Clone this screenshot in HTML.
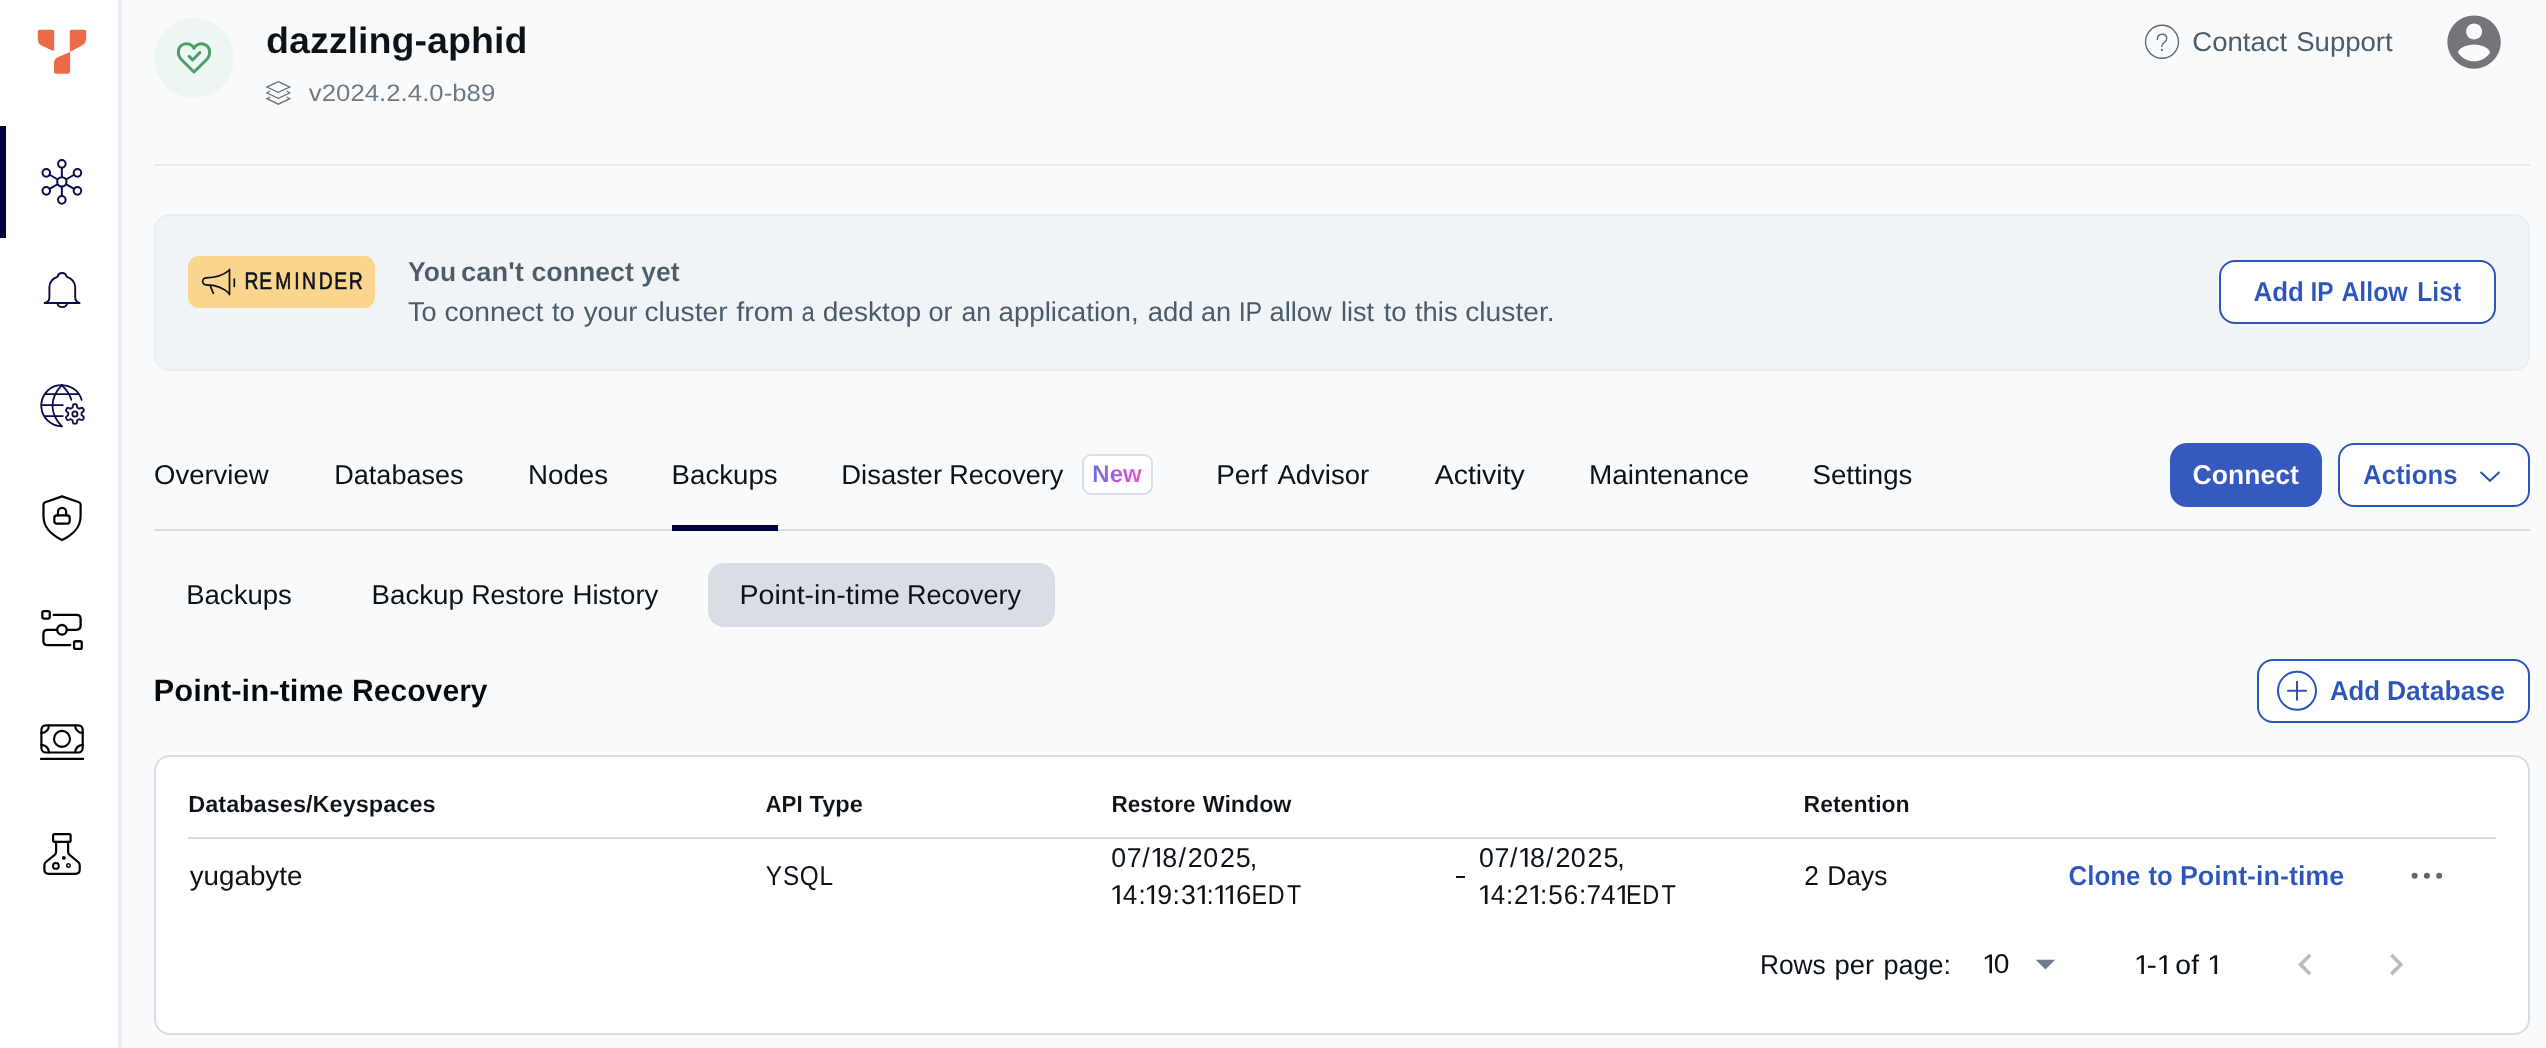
<!DOCTYPE html>
<html><head><meta charset="utf-8"><title>dazzling-aphid</title>
<style>
html,body{margin:0;padding:0}
body{width:2546px;height:1048px;overflow:hidden;background:#f9fafc;position:relative;font-family:"Liberation Sans",sans-serif}
.b{position:absolute;box-sizing:border-box}
.t{position:absolute;white-space:pre;line-height:1;font-family:"Liberation Sans",sans-serif;will-change:transform}
svg{position:absolute;left:0;top:0;overflow:visible}
</style></head><body>
<!-- sidebar -->
<div class="b" style="left:0;top:0;width:118px;height:1048px;background:#fff"></div>
<div class="b" style="left:118px;top:0;width:4px;height:1048px;background:#e9ecf1"></div>
<div class="b" style="left:0;top:126px;width:6px;height:112px;background:#000041"></div>
<!-- header -->
<div class="b" style="left:154px;top:18px;width:80px;height:80px;border-radius:50%;background:#edf6f2"></div>
<div class="b" style="left:154px;top:164px;width:2376px;height:2px;background:#e9edf2"></div>
<!-- banner -->
<div class="b" style="left:154px;top:214px;width:2376px;height:157px;border-radius:16px;background:#f0f4f7;border:2px solid #e9eef2"></div>
<div class="b" style="left:188px;top:256px;width:187px;height:52px;border-radius:11px;background:#fad58e"></div>
<div class="b" style="left:2219px;top:260px;width:277px;height:64px;border-radius:16px;background:#fff;border:2px solid #2b55b9"></div>
<!-- tabs -->
<div class="b" style="left:154px;top:529px;width:2376px;height:2px;background:#d5dde4"></div>
<div class="b" style="left:672px;top:525px;width:106px;height:6px;background:#000041"></div>
<div class="b" style="left:1082px;top:454px;width:71px;height:41px;border-radius:9px;background:#fff;border:2px solid #d8dfe8"></div>
<div class="b" style="left:2170px;top:443px;width:152px;height:64px;border-radius:17px;background:#3559be"></div>
<div class="b" style="left:2338px;top:443px;width:192px;height:64px;border-radius:16px;background:#fff;border:2px solid #2b55b9"></div>
<!-- subtabs -->
<div class="b" style="left:708px;top:563px;width:347px;height:64px;border-radius:16px;background:#d9dee5"></div>
<!-- section -->
<div class="b" style="left:2257px;top:659px;width:273px;height:64px;border-radius:16px;background:#fff;border:2px solid #2b55b9"></div>
<!-- card -->
<div class="b" style="left:154px;top:755px;width:2376px;height:280px;border-radius:16px;background:#fff;border:2px solid #d8dde5"></div>
<div class="b" style="left:188px;top:837px;width:2308px;height:2px;background:#d5dde4"></div>

<div class="b" style="left:1456.3px;top:875.8px;width:8.7px;height:2.3px;background:#0b1219;border-radius:0.3px"></div>
<svg id="txt" width="2546" height="1048" viewBox="0 0 2546 1048" style="will-change:transform;font-family:'Liberation Sans',sans-serif" text-rendering="geometricPrecision">
<defs><linearGradient id="ng" x1="0" y1="0" x2="1" y2="0"><stop offset="0" stop-color="#6a70e2"/><stop offset="0.55" stop-color="#b45ad6"/><stop offset="1" stop-color="#ec4fcf"/></linearGradient></defs>
<text transform="translate(265.98,52.90) scale(1.0236,1)" font-size="36.80" font-weight="700" fill="#0b1219" stroke="#f9fafc" stroke-width="0.12">dazzling-aphid</text>
<text transform="translate(308.80,100.90) scale(1.0800,1)" font-size="23.80" font-weight="400" fill="#6b7a87" letter-spacing="0.046" >v2024.2.4.0-b89</text>
<text transform="translate(2192.29,50.80) scale(1.0135,1)" font-size="27.20" font-weight="400" fill="#4a5d6d" >Contact</text>
<text transform="translate(2296.19,50.80) scale(1.0130,1)" font-size="27.20" font-weight="400" fill="#4a5d6d" >Support</text>
<text transform="translate(408.00,280.80) scale(0.9744,1)" font-size="27.20" font-weight="700" fill="#4a5c6b" stroke="#f0f4f7" stroke-width="0.12">You</text>
<text transform="translate(460.99,280.80) scale(1.0071,1)" font-size="27.20" font-weight="700" fill="#4a5c6b" stroke="#f0f4f7" stroke-width="0.12">can't</text>
<text transform="translate(531.52,280.80) scale(0.9813,1)" font-size="27.20" font-weight="700" fill="#4a5c6b" stroke="#f0f4f7" stroke-width="0.12">connect</text>
<text transform="translate(641.25,280.80) scale(0.9748,1)" font-size="27.20" font-weight="700" fill="#4a5c6b" stroke="#f0f4f7" stroke-width="0.12">yet</text>
<text transform="translate(408.00,320.80) scale(0.9967,1)" font-size="27.20" font-weight="400" fill="#4a5c6b" >To</text>
<text transform="translate(444.46,320.80) scale(1.0378,1)" font-size="27.20" font-weight="400" fill="#4a5c6b" >connect</text>
<text transform="translate(552.00,320.80) scale(1.0091,1)" font-size="27.20" font-weight="400" fill="#4a5c6b" >to</text>
<text transform="translate(583.75,320.80) scale(1.0173,1)" font-size="27.20" font-weight="400" fill="#4a5c6b" >your</text>
<text transform="translate(644.46,320.80) scale(1.0377,1)" font-size="27.20" font-weight="400" fill="#4a5c6b" >cluster</text>
<text transform="translate(736.25,320.80) scale(1.0573,1)" font-size="27.20" font-weight="400" fill="#4a5c6b" >from</text>
<text transform="translate(801.62,320.80) scale(0.8800,1)" font-size="27.20" font-weight="400" fill="#4a5c6b" >a</text>
<text transform="translate(822.72,320.80) scale(1.0338,1)" font-size="27.20" font-weight="400" fill="#4a5c6b" >desktop</text>
<text transform="translate(928.51,320.80) scale(0.9948,1)" font-size="27.20" font-weight="400" fill="#4a5c6b" >or</text>
<text transform="translate(961.52,320.80) scale(0.9779,1)" font-size="27.20" font-weight="400" fill="#4a5c6b" >an</text>
<text transform="translate(998.48,320.80) scale(1.0186,1)" font-size="27.20" font-weight="400" fill="#4a5c6b" >application,</text>
<text transform="translate(1147.74,320.80) scale(1.0118,1)" font-size="27.20" font-weight="400" fill="#4a5c6b" >add</text>
<text transform="translate(1201.00,320.80) scale(0.9957,1)" font-size="27.20" font-weight="400" fill="#4a5c6b" >an</text>
<text transform="translate(1238.66,320.80) scale(0.9200,1)" font-size="27.20" font-weight="400" fill="#4a5c6b" >IP</text>
<text transform="translate(1269.50,320.80) scale(1.0029,1)" font-size="27.20" font-weight="400" fill="#4a5c6b" >allow</text>
<text transform="translate(1341.01,320.80) scale(0.9947,1)" font-size="27.20" font-weight="400" fill="#4a5c6b" >list</text>
<text transform="translate(1383.75,320.80) scale(1.0091,1)" font-size="27.20" font-weight="400" fill="#4a5c6b" >to</text>
<text transform="translate(1415.00,320.80) scale(1.0069,1)" font-size="27.20" font-weight="400" fill="#4a5c6b" >this</text>
<text transform="translate(1465.21,320.80) scale(1.0380,1)" font-size="27.20" font-weight="400" fill="#4a5c6b" >cluster.</text>
<text transform="translate(2253.50,300.60) scale(0.9543,1)" font-size="27.20" font-weight="700" fill="#2b55b9" stroke="#ffffff" stroke-width="0.12">Add</text>
<text transform="translate(2310.50,300.60) scale(0.9001,1)" font-size="27.20" font-weight="700" fill="#2b55b9" stroke="#ffffff" stroke-width="0.12">IP</text>
<text transform="translate(2341.40,300.60) scale(0.9148,1)" font-size="27.20" font-weight="700" fill="#2b55b9" stroke="#ffffff" stroke-width="0.12">Allow</text>
<text transform="translate(2417.29,300.60) scale(0.9073,1)" font-size="27.20" font-weight="700" fill="#2b55b9" stroke="#ffffff" stroke-width="0.12">List</text>
<text transform="translate(1092.30,482.00) scale(1.0004,1)" font-size="24.00" font-weight="700" fill="url(#ng)" stroke="#ffffff" stroke-width="0.12">New</text>
<text transform="translate(154.06,483.90) scale(1.0103,1)" font-size="27.20" font-weight="400" fill="#0b1219" >Overview</text>
<text transform="translate(334.31,483.90) scale(0.9939,1)" font-size="27.20" font-weight="400" fill="#0b1219" >Databases</text>
<text transform="translate(527.96,483.90) scale(1.0198,1)" font-size="27.20" font-weight="400" fill="#0b1219" >Nodes</text>
<text transform="translate(671.57,483.90) scale(1.0169,1)" font-size="27.20" font-weight="400" fill="#0b1219" >Backups</text>
<text transform="translate(841.23,483.90) scale(1.0112,1)" font-size="27.20" font-weight="400" fill="#0b1219" >Disaster</text>
<text transform="translate(949.26,483.90) scale(0.9935,1)" font-size="27.20" font-weight="400" fill="#0b1219" >Recovery</text>
<text transform="translate(1216.14,483.90) scale(1.0288,1)" font-size="27.20" font-weight="400" fill="#0b1219" >Perf</text>
<text transform="translate(1277.50,483.90) scale(1.0110,1)" font-size="27.20" font-weight="400" fill="#0b1219" >Advisor</text>
<text transform="translate(1434.70,483.90) scale(1.0461,1)" font-size="27.20" font-weight="400" fill="#0b1219" >Activity</text>
<text transform="translate(1588.94,483.90) scale(1.0278,1)" font-size="27.20" font-weight="400" fill="#0b1219" >Maintenance</text>
<text transform="translate(1812.48,483.90) scale(1.0172,1)" font-size="27.20" font-weight="400" fill="#0b1219" >Settings</text>
<text transform="translate(2192.52,484.10) scale(0.9787,1)" font-size="27.20" font-weight="700" fill="#ffffff" stroke="#3559be" stroke-width="0.12">Connect</text>
<text transform="translate(2363.10,484.10) scale(0.9465,1)" font-size="27.20" font-weight="700" fill="#2b55b9" stroke="#ffffff" stroke-width="0.12">Actions</text>
<text transform="translate(186.17,603.90) scale(1.0130,1)" font-size="27.20" font-weight="400" fill="#0b1219" >Backups</text>
<text transform="translate(371.56,603.90) scale(1.0176,1)" font-size="27.20" font-weight="400" fill="#0b1219" >Backup</text>
<text transform="translate(471.45,603.90) scale(0.9753,1)" font-size="27.20" font-weight="400" fill="#0b1219" >Restore</text>
<text transform="translate(572.47,603.90) scale(1.0157,1)" font-size="27.20" font-weight="400" fill="#0b1219" >History</text>
<text transform="translate(739.45,603.90) scale(1.0510,1)" font-size="27.20" font-weight="400" fill="#0b1219" >Point-in-time</text>
<text transform="translate(907.01,603.90) scale(0.9935,1)" font-size="27.20" font-weight="400" fill="#0b1219" >Recovery</text>
<text transform="translate(153.58,701.10) scale(1.0086,1)" font-size="30.80" font-weight="700" fill="#05090d" stroke="#f9fafc" stroke-width="0.12">Point-in-time</text>
<text transform="translate(351.94,701.10) scale(0.9784,1)" font-size="30.80" font-weight="700" fill="#05090d" stroke="#f9fafc" stroke-width="0.12">Recovery</text>
<text transform="translate(2329.95,700.10) scale(0.9494,1)" font-size="27.20" font-weight="700" fill="#2b55b9" stroke="#ffffff" stroke-width="0.12">Add</text>
<text transform="translate(2386.92,700.10) scale(0.9764,1)" font-size="27.20" font-weight="700" fill="#2b55b9" stroke="#ffffff" stroke-width="0.12">Database</text>
<text transform="translate(188.19,811.90) scale(1.0067,1)" font-size="23.40" font-weight="700" fill="#0b1219" stroke="#ffffff" stroke-width="0.12">Databases/Keyspaces</text>
<text transform="translate(765.45,811.90) scale(0.9535,1)" font-size="23.40" font-weight="700" fill="#0b1219" stroke="#ffffff" stroke-width="0.12">API</text>
<text transform="translate(809.50,811.90) scale(1.0118,1)" font-size="23.40" font-weight="700" fill="#0b1219" stroke="#ffffff" stroke-width="0.12">Type</text>
<text transform="translate(1111.54,811.90) scale(0.9641,1)" font-size="23.40" font-weight="700" fill="#0b1219" stroke="#ffffff" stroke-width="0.12">Restore</text>
<text transform="translate(1202.70,811.90) scale(0.9919,1)" font-size="23.40" font-weight="700" fill="#0b1219" stroke="#ffffff" stroke-width="0.12">Window</text>
<text transform="translate(1803.52,811.90) scale(0.9843,1)" font-size="23.40" font-weight="700" fill="#0b1219" stroke="#ffffff" stroke-width="0.12">Retention</text>
<text transform="translate(189.70,884.90) scale(1.0209,1)" font-size="27.20" font-weight="400" fill="#0b1219" >yugabyte</text>
<text transform="translate(1804.33,884.60) scale(0.9692,1)" font-size="27.20" font-weight="400" fill="#0b1219" >2</text>
<text transform="translate(1827.21,884.60) scale(0.9722,1)" font-size="27.20" font-weight="400" fill="#0b1219" >Days</text>
<text transform="translate(2068.60,884.60) scale(0.9502,1)" font-size="27.20" font-weight="700" fill="#2b55b9" stroke="#ffffff" stroke-width="0.12">Clone</text>
<text transform="translate(2148.50,884.60) scale(0.9400,1)" font-size="27.20" font-weight="700" fill="#2b55b9" stroke="#ffffff" stroke-width="0.12">to</text>
<text transform="translate(2179.91,884.60) scale(0.9891,1)" font-size="27.20" font-weight="700" fill="#2b55b9" stroke="#ffffff" stroke-width="0.12">Point-in-time</text>
<text transform="translate(1759.96,973.80) scale(0.9681,1)" font-size="27.20" font-weight="400" fill="#0b1219" >Rows</text>
<text transform="translate(1834.49,973.80) scale(1.0068,1)" font-size="27.20" font-weight="400" fill="#0b1219" >per</text>
<text transform="translate(1883.41,973.80) scale(0.9926,1)" font-size="27.20" font-weight="400" fill="#0b1219" >page:</text>
<text transform="scale(0.8026,1)" x="304.77 322.96 342.93 366.53 376.24 397.05 416.41 434.48" y="288.80" font-size="24.10" font-weight="400" fill="#0b1219" stroke="#0b1219" stroke-width="0.55">REMINDER</text>
<text transform="scale(0.8927,1)" x="857.81 877.07 895.97 917.99" y="884.90" font-size="27.30" font-weight="400" fill="#0b1219" >YSQL</text>
<text transform="scale(0.9800,1)" x="1133.99 1149.85 1165.69" y="866.70" font-size="27.20" font-weight="400" fill="#0b1219" >07/</text>
<path transform="translate(1149.92,866.70) scale(0.01434,-0.01328)" d="M515,0 V1237 L197,1010 V1180 L530,1409 H696 V0 Z" fill="#0b1219"/>
<text transform="scale(0.9885,1)" x="1175.85 1192.15 1201.60 1217.24 1234.13 1250.21 1264.18" y="866.70" font-size="27.20" font-weight="400" fill="#0b1219" >8/2025,</text>
<text transform="scale(0.9800,1)" x="1509.09 1524.95 1540.80" y="866.70" font-size="27.20" font-weight="400" fill="#0b1219" >07/</text>
<path transform="translate(1517.52,866.70) scale(0.01434,-0.01328)" d="M515,0 V1237 L197,1010 V1180 L530,1409 H696 V0 Z" fill="#0b1219"/>
<text transform="scale(0.9885,1)" x="1547.75 1564.04 1573.49 1589.13 1606.02 1622.10 1636.07" y="866.70" font-size="27.20" font-weight="400" fill="#0b1219" >8/2025,</text>
<path transform="translate(1109.72,904.00) scale(0.01434,-0.01328)" d="M515,0 V1237 L197,1010 V1180 L530,1409 H696 V0 Z" fill="#0b1219"/>
<text transform="scale(0.9553,1)" x="1175.32 1191.77" y="904.00" font-size="27.20" font-weight="400" fill="#0b1219" >4:</text>
<path transform="translate(1144.12,904.00) scale(0.01434,-0.01328)" d="M515,0 V1237 L197,1010 V1180 L530,1409 H696 V0 Z" fill="#0b1219"/>
<text transform="scale(0.9800,1)" x="1180.87 1196.51 1205.05" y="904.00" font-size="27.20" font-weight="400" fill="#0b1219" >9:3</text>
<path transform="translate(1194.82,904.00) scale(0.01434,-0.01328)" d="M515,0 V1237 L197,1010 V1180 L530,1409 H696 V0 Z" fill="#0b1219"/>
<text transform="scale(0.9000,1)" x="1340.89" y="904.00" font-size="27.20" font-weight="400" fill="#0b1219" >:</text>
<path transform="translate(1212.62,904.00) scale(0.01434,-0.01328)" d="M515,0 V1237 L197,1010 V1180 L530,1409 H696 V0 Z" fill="#0b1219"/>
<path transform="translate(1222.92,904.00) scale(0.01434,-0.01328)" d="M515,0 V1237 L197,1010 V1180 L530,1409 H696 V0 Z" fill="#0b1219"/>
<text transform="scale(1.0154,1)" x="1217.26" y="904.00" font-size="27.20" font-weight="400" fill="#0b1219" >6</text>
<text transform="scale(0.8542,1)" x="1465.21 1484.06 1506.63" y="904.00" font-size="27.20" font-weight="400" fill="#0b1219" >EDT</text>
<path transform="translate(1477.52,904.00) scale(0.01434,-0.01328)" d="M515,0 V1237 L197,1010 V1180 L530,1409 H696 V0 Z" fill="#0b1219"/>
<text transform="scale(0.9500,1)" x="1569.13 1585.32 1593.71" y="904.00" font-size="27.20" font-weight="400" fill="#0b1219" >4:2</text>
<path transform="translate(1527.82,904.00) scale(0.01434,-0.01328)" d="M515,0 V1237 L197,1010 V1180 L530,1409 H696 V0 Z" fill="#0b1219"/>
<text transform="scale(0.9597,1)" x="1604.67 1613.25 1629.40 1645.25 1653.21 1668.22" y="904.00" font-size="27.20" font-weight="400" fill="#0b1219" >:56:74</text>
<path transform="translate(1614.82,904.00) scale(0.01434,-0.01328)" d="M515,0 V1237 L197,1010 V1180 L530,1409 H696 V0 Z" fill="#0b1219"/>
<text transform="scale(0.8646,1)" x="1880.72 1899.50 1921.77" y="904.00" font-size="27.20" font-weight="400" fill="#0b1219" >EDT</text>
<path transform="translate(1982.02,973.20) scale(0.01434,-0.01328)" d="M515,0 V1237 L197,1010 V1180 L530,1409 H696 V0 Z" fill="#0b1219"/>
<text transform="scale(1.0357,1)" x="1925.01" y="973.20" font-size="27.20" font-weight="400" fill="#0b1219" >0</text>
<path transform="translate(2133.92,973.90) scale(0.01434,-0.01328)" d="M515,0 V1237 L197,1010 V1180 L530,1409 H696 V0 Z" fill="#0b1219"/>
<text transform="scale(1.1500,1)" x="1866.63" y="973.90" font-size="27.20" font-weight="400" fill="#0b1219" >-</text>
<path transform="translate(2156.62,973.90) scale(0.01434,-0.01328)" d="M515,0 V1237 L197,1010 V1180 L530,1409 H696 V0 Z" fill="#0b1219"/>
<text transform="scale(1.0381,1)" x="2095.44 2110.88" y="973.90" font-size="27.20" font-weight="400" fill="#0b1219" >of</text>
<path transform="translate(2207.12,973.90) scale(0.01434,-0.01328)" d="M515,0 V1237 L197,1010 V1180 L530,1409 H696 V0 Z" fill="#0b1219"/>
</svg>

<svg width="2546" height="1048" viewBox="0 0 2546 1048" fill="none" stroke-linecap="round" stroke-linejoin="round">
<!-- logo -->
<g fill="#ec6a47" stroke="none">
<path d="M39.8,29.8 H52.4 Q54.2,29.8 54.2,31.6 V49.4 Q54.2,51.4 52.2,50.5 L42.4,46 Q37.8,43.8 37.8,39 V31.8 Q37.8,29.8 39.8,29.8 Z"/>
<path d="M71.6,29.8 H84.2 Q86.2,29.8 86.2,31.8 V38.6 Q86.2,43.2 82,45.4 L69.8,52.1 V31.6 Q69.8,29.8 71.6,29.8 Z"/>
<path d="M70.1,52.1 V71.8 Q70.1,73.8 68.1,73.8 H56 Q54,73.8 54,71.8 V63.6 Q54,59 58.3,57.1 Z"/>
</g>
<!-- cluster -->
<g stroke="#0b0b47" stroke-width="2"><circle cx="61.85" cy="181.85" r="4.7"/><circle cx="61.85" cy="163.85" r="3.8"/><path d="M61.85,176.15 L61.85,167.65"/><circle cx="77.44" cy="172.85" r="3.8"/><path d="M66.79,179.00 L74.15,174.75"/><circle cx="77.44" cy="190.85" r="3.8"/><path d="M66.79,184.70 L74.15,188.95"/><circle cx="61.85" cy="199.85" r="3.8"/><path d="M61.85,187.55 L61.85,196.05"/><circle cx="46.26" cy="190.85" r="3.8"/><path d="M56.91,184.70 L49.55,188.95"/><circle cx="46.26" cy="172.85" r="3.8"/><path d="M56.91,179.00 L49.55,174.75"/></g>
<!-- bell -->
<g stroke="#0b0b47" stroke-width="1.9">
<path d="M44.6,303 H79.6"/>
<path d="M45.2,302.8 C48,302 49.4,300.4 49.4,297.6 V287 C49.4,282 52.6,278.6 57.6,276.6 A4.6,4.6 0 0 1 66.6,276.6 C71.6,278.6 75.2,282 75.2,287 V297.6 C75.2,300.4 76.6,302 79.2,302.8"/>
<path d="M57.4,303.4 A5,4.6 0 0 0 67.2,303.4"/>
</g>
<!-- globe + gear -->
<g stroke="#0b0b47" stroke-width="1.8">
<path d="M61.85,426.3 A20.6,20.6 0 1 1 81.6,399.85"/>
<path d="M44.6,394.1 H79.2 M41.7,405.1 H62.8 M44.6,416.1 H62.8"/>
<path d="M61.85,385.1 C55.6,391.6 52.5,398.6 52.5,405.7 C52.5,412.8 55.6,419.8 61.85,426.3"/>
<path d="M61.85,385.1 C66.4,389.6 69.8,394.2 71.3,399.8"/>
<path d="M81.60,413.95 L81.59,414.24 L81.57,414.53 L81.54,414.82 L81.57,415.13 L82.19,415.57 L82.82,416.07 L83.42,416.64 L83.94,417.24 L83.86,417.66 L83.69,418.05 L83.50,418.43 L83.30,418.80 L83.08,419.16 L82.85,419.51 L82.60,419.85 L82.27,420.14 L81.49,419.99 L80.70,419.75 L79.94,419.45 L79.25,419.14 L78.98,419.27 L78.74,419.44 L78.50,419.60 L78.25,419.75 L77.99,419.89 L77.73,420.02 L77.46,420.14 L77.22,420.32 L77.14,421.07 L77.02,421.87 L76.83,422.68 L76.57,423.43 L76.17,423.57 L75.75,423.61 L75.32,423.64 L74.90,423.65 L74.48,423.64 L74.05,423.61 L73.63,423.57 L73.23,423.43 L72.97,422.68 L72.78,421.87 L72.66,421.07 L72.58,420.32 L72.34,420.14 L72.07,420.02 L71.81,419.89 L71.55,419.75 L71.30,419.60 L71.06,419.44 L70.82,419.27 L70.55,419.14 L69.86,419.45 L69.10,419.75 L68.31,419.99 L67.53,420.14 L67.20,419.85 L66.95,419.51 L66.72,419.16 L66.50,418.80 L66.30,418.43 L66.11,418.05 L65.94,417.66 L65.86,417.24 L66.38,416.64 L66.98,416.07 L67.61,415.57 L68.23,415.13 L68.26,414.82 L68.23,414.53 L68.21,414.24 L68.20,413.95 L68.21,413.66 L68.23,413.37 L68.26,413.08 L68.23,412.77 L67.61,412.33 L66.98,411.83 L66.38,411.26 L65.86,410.66 L65.94,410.24 L66.11,409.85 L66.30,409.47 L66.50,409.10 L66.72,408.74 L66.95,408.39 L67.20,408.05 L67.53,407.76 L68.31,407.91 L69.10,408.15 L69.86,408.45 L70.55,408.76 L70.82,408.63 L71.06,408.46 L71.30,408.30 L71.55,408.15 L71.81,408.01 L72.07,407.88 L72.34,407.76 L72.58,407.58 L72.66,406.83 L72.78,406.03 L72.97,405.22 L73.23,404.47 L73.63,404.33 L74.05,404.29 L74.48,404.26 L74.90,404.25 L75.32,404.26 L75.75,404.29 L76.17,404.33 L76.57,404.47 L76.83,405.22 L77.02,406.03 L77.14,406.83 L77.22,407.58 L77.46,407.76 L77.73,407.88 L77.99,408.01 L78.25,408.15 L78.50,408.30 L78.74,408.46 L78.98,408.63 L79.25,408.76 L79.94,408.45 L80.70,408.15 L81.49,407.91 L82.27,407.76 L82.60,408.05 L82.85,408.39 L83.08,408.74 L83.30,409.10 L83.50,409.47 L83.69,409.85 L83.86,410.24 L83.94,410.66 L83.42,411.26 L82.82,411.83 L82.19,412.33 L81.57,412.77 L81.54,413.08 L81.57,413.37 L81.59,413.66 Z"/>
<circle cx="74.9" cy="413.95" r="2.6"/>
</g>
<!-- shield -->
<g stroke="#000" stroke-width="2.2">
<path d="M62.05,496.4 L45.2,502.2 Q43.5,502.8 43.5,504.8 V516 C43.5,528.4 51.8,535 62.05,540.1 C72.3,535 80.6,528.4 80.6,516 V504.8 Q80.6,502.8 78.9,502.2 Z"/>
<rect x="54.3" y="515.4" width="15.4" height="8.3" rx="2.6"/>
<path d="M57.95,515.4 V512 A4.1,4.1 0 0 1 66.15,512 V515.4"/>
</g>
<!-- pipeline -->
<g stroke="#000" stroke-width="2.3">
<rect x="42.35" y="611.15" width="7.4" height="7.4" rx="1.7"/>
<path d="M53.7,614.9 H76.4 Q80.6,614.9 80.6,619.1 V625.6 Q80.6,629.8 76.4,629.8 H67.9"/>
<circle cx="62" cy="629.8" r="4.8"/>
<path d="M56.2,629.8 H47.6 Q43.4,629.8 43.4,634 V640.9 Q43.4,645.1 47.6,645.1 H70.3"/>
<rect x="74.05" y="641.25" width="7.7" height="7.6" rx="1.7"/>
</g>
<!-- money -->
<g stroke="#000" stroke-width="2.15">
<rect x="41.4" y="725.3" width="41.3" height="27.2" rx="4.5"/>
<circle cx="62" cy="738.9" r="8"/>
<path d="M49,725.3 A7.6,7.6 0 0 1 41.4,732.9 M75.1,725.3 A7.6,7.6 0 0 0 82.7,732.9 M41.4,744.9 A7.6,7.6 0 0 1 49,752.5 M82.7,744.9 A7.6,7.6 0 0 0 75.1,752.5"/>
<path d="M41,758.9 H83.1"/>
</g>
<!-- flask -->
<g stroke="#000" stroke-width="2.2">
<rect x="53.1" y="834.1" width="17.5" height="7.7" rx="1.4"/>
<path d="M56.1,841.8 V851.8 Q56.1,853.6 54.7,854.8 L45.9,862 Q44.4,863.2 44.4,865.2 V869.6 Q44.4,873.9 48.7,873.9 H75.4 Q79.7,873.9 79.7,869.6 V865.2 Q79.7,863.2 78.2,862 L69.5,854.8 Q68.1,853.6 68.1,851.8 V841.8"/>
<circle cx="55.9" cy="865.9" r="2.9" stroke-width="2"/>
<circle cx="63.9" cy="857.9" r="1.9" fill="#000" stroke="none"/>
<circle cx="68.5" cy="865.5" r="1.8" stroke-width="1.4"/>
</g>
<!-- heart -->
<g stroke="#4aa067" stroke-width="3">
<path d="M194,72 L181.6,59.8 C176.4,54.4 177.6,46.4 184,44.2 C188,42.9 192,44.6 194,48.2 C196,44.6 200,42.9 204,44.2 C210.4,46.4 211.6,54.4 206.4,59.8 Z"/>
<path d="M189.2,56.4 L192.6,60 L199.8,52.6"/>
</g>
<!-- layers -->
<g stroke="#66747f" stroke-width="1.3" stroke-linejoin="miter">
<path d="M278.3,81.6 L289.7,87.1 L278.3,92.4 L266.9,87.1 Z"/>
<path d="M269.6,91.3 L266.9,93 L278.3,98.4 L289.7,93 L287.2,91.3"/>
<path d="M269.6,97.3 L266.9,98.7 L278.3,104.2 L289.7,98.7 L287.2,97.3"/>
</g>
<!-- help -->
<g stroke="#5a6b7a" stroke-width="1.4">
<circle cx="2162" cy="41.8" r="16.5"/>
<path d="M2157.3,39.6 C2157.3,35.8 2159.8,34.3 2162.2,34.3 C2164.8,34.3 2166.7,36 2166.7,38.4 C2166.7,42.6 2161.8,42.4 2161.8,46.6"/>
<circle cx="2161.9" cy="49.9" r="1.1" fill="#5a6b7a" stroke="none"/>
</g>
<!-- avatar -->
<g transform="translate(2442.1,10.1) scale(2.6667)" fill="#747578" stroke="none">
<path d="M12 2C6.48 2 2 6.48 2 12s4.48 10 10 10 10-4.48 10-10S17.52 2 12 2zm0 3c1.66 0 3 1.34 3 3s-1.34 3-3 3-3-1.34-3-3 1.34-3 3-3zm0 14.2c-2.5 0-4.71-1.28-6-3.22.03-1.99 4-3.08 6-3.08 1.99 0 5.97 1.09 6 3.08-1.29 1.94-3.5 3.22-6 3.22z"/>
</g>
<!-- megaphone -->
<g stroke="#0b1219" stroke-width="1.7">
<path d="M229.5,269.4 V294.6"/>
<path d="M229.5,270.2 C223,275.6 214,277.8 206.2,277.8 A3.55,3.55 0 0 0 206.2,284.9 C214,284.9 223,287.2 229.5,293.8"/>
<path d="M210.1,285.6 L213.4,293.3"/>
<path d="M234.3,279.2 V286.3"/>
</g>
<!-- actions chevron -->
<path d="M2480.5,471.9 L2490,480.8 L2499.5,471.9" stroke="#2b55b9" stroke-width="2" stroke-linejoin="miter" stroke-linecap="butt"/>
<!-- add db plus -->
<g stroke="#2b55b9" stroke-width="2" stroke-linecap="butt">
<circle cx="2297" cy="690.8" r="19"/>
<path d="M2287.2,690.8 H2306.8 M2297,681 V700.6"/>
</g>
<!-- row dots -->
<g fill="#666" stroke="none"><circle cx="2414.6" cy="875.8" r="3"/><circle cx="2426.9" cy="875.8" r="3"/><circle cx="2439.2" cy="875.8" r="3"/></g>
<!-- pagination -->
<path d="M2035.7,959.7 H2055.2 L2045.45,969.5 Z" fill="#6d7c88" stroke="none"/>
<g fill="#bdbdbd" stroke="none">
<path transform="translate(2283.6,943) scale(1.8)" d="M15.41 16.59L10.83 12l4.58-4.59L14 6l-6 6 6 6 1.41-1.41z"/>
<path transform="translate(2374.6,943) scale(1.8)" d="M8.59 16.59L13.17 12 8.59 7.41 10 6l6 6-6 6-1.41-1.41z"/>
</g>
</svg>
</body></html>
